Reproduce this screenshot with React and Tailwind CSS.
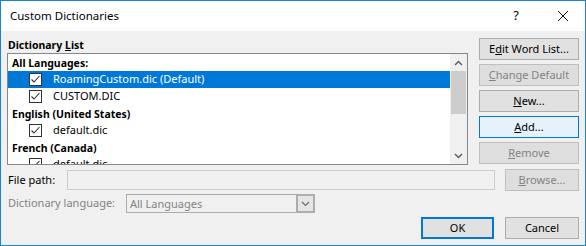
import React from "react";

const font = { fontFamily: '"Segoe UI", "Noto Sans", "Liberation Sans", sans-serif' };

function Check() {
  return (
    <span className="flex h-[13px] w-[13px] items-center justify-center border border-[#333333] bg-white">
      <svg width="11" height="11" viewBox="0 0 11 11">
        <polyline points="1.5,5.5 4,8 9.5,2" fill="none" stroke="#333333" strokeWidth="1.1" />
      </svg>
    </span>
  );
}

function Btn({ children, disabled, focus, def, className = "" }) {
  let cls = "border border-[#adadad] bg-[#e1e1e1] text-black";
  if (disabled) cls = "border border-[#bfbfbf] bg-[#dedede] text-[#838383]";
  if (focus) cls = "border border-[#0078d7] bg-[#e5f1fb] text-black";
  if (def) cls = "border-2 border-[#0078d7] bg-[#e1e1e1] text-black";
  return (
    <div className={`flex h-[22px] items-center justify-center text-[11px] ${cls} ${className}`}>
      {children}
    </div>
  );
}

function Header({ children }) {
  return <div className="flex h-[17px] items-center pl-[4px] pt-[2px] text-[10.5px] font-bold text-black">{children}</div>;
}

function Item({ children, selected }) {
  return (
    <div className={`flex h-[17px] items-center text-[11px] ${selected ? "bg-[#0078d7] text-white" : "text-black"}`}>
      <div className="ml-[21px] mr-[11px]">
        <Check />
      </div>
      <span>{children}</span>
    </div>
  );
}

export default function App() {
  return (
    <div style={font} className="flex h-[246px] w-[586px] flex-col overflow-hidden border border-[#1883d7] bg-[#f0f0f0]">
      <div className="flex h-[30px] shrink-0 items-center bg-white">
        <span className="ml-[9px] flex-1 text-[11.5px] text-black">Custom Dictionaries</span>
        <span className="mr-[38px] text-[13px] text-black">?</span>
        <svg width="12" height="12" viewBox="0 0 12 12" className="mr-[16px]">
          <path d="M1 1 L11 11 M11 1 L1 11" stroke="#111" strokeWidth="1" />
        </svg>
      </div>
      <div className="flex flex-1 flex-col pl-[6px] pr-[6px]">
        <div className="flex">
          <div className="flex w-[461px] flex-col">
            <div className="mt-[7px] h-[15px] pl-[1px] text-[10.5px] leading-[15px] font-bold text-black">
              Dictionary <span className="underline">L</span>ist
            </div>
            <div className="flex h-[112px] border border-[#828790] bg-white">
              <div className="flex-1 overflow-hidden">
                <Header>All Languages:</Header>
                <Item selected>RoamingCustom.dic (Default)</Item>
                <Item>CUSTOM.DIC</Item>
                <Header>English (United States)</Header>
                <Item>default.dic</Item>
                <Header>French (Canada)</Header>
                <Item>default.dic</Item>
              </div>
              <div className="flex w-[17px] flex-col bg-[#f0f0f0]">
                <div className="flex h-[17px] items-center justify-center">
                  <svg width="9" height="6" viewBox="0 0 9 6">
                    <polyline points="1,5 4.5,1.5 8,5" fill="none" stroke="#606060" strokeWidth="1.5" />
                  </svg>
                </div>
                <div className="mx-[1px] h-[43px] bg-[#cdcdcd]"></div>
                <div className="flex-1"></div>
                <div className="flex h-[17px] items-center justify-center">
                  <svg width="9" height="6" viewBox="0 0 9 6">
                    <polyline points="1,1 4.5,4.5 8,1" fill="none" stroke="#606060" strokeWidth="1.5" />
                  </svg>
                </div>
              </div>
            </div>
          </div>
          <div className="ml-[11px] mt-[7px] flex w-[100px] flex-col gap-[4px]">
            <Btn>
              E<span className="underline">d</span>it Word List...
            </Btn>
            <Btn disabled>
              <span className="underline">C</span>hange Default
            </Btn>
            <Btn>
              <span className="underline">N</span>ew...
            </Btn>
            <Btn focus>
              <span className="underline">A</span>dd...
            </Btn>
            <Btn disabled>
              <span className="underline">R</span>emove
            </Btn>
          </div>
        </div>
        <div className="mt-[4px] flex items-center">
          <span className="w-[60px] pl-[1px] text-[11px] text-black">File path:</span>
          <div className="h-[20px] w-[428px] border border-[#cccccc] bg-[#f0f0f0]"></div>
          <Btn disabled className="ml-[10px] w-[74px]">
            <span className="underline">B</span>rowse...
          </Btn>
        </div>
        <div className="mt-[3px] flex items-center">
          <span className="w-[119px] pl-[1px] text-[11px] text-[#838383]">
            Dictionary lan<span className="underline">g</span>uage:
          </span>
          <div className="flex h-[19px] w-[189px] border border-[#adadad] bg-[#f0f0f0]">
            <span className="flex-1 pl-[3px] text-[11px] leading-[17px] text-[#838383]">All Languages</span>
            <div className="-my-[1px] -mr-[1px] flex w-[19px] items-center justify-center border-2 border-[#adadad] bg-[#e5e5e5]">
              <svg width="9" height="6" viewBox="0 0 9 6">
                <polyline points="1,1 4.5,4.5 8,1" fill="none" stroke="#6d6d6d" strokeWidth="1.2" />
              </svg>
            </div>
          </div>
        </div>
        <div className="mt-[4px] flex justify-end">
          <Btn def className="w-[73px]">OK</Btn>
          <Btn className="ml-[11px] w-[74px]">Cancel</Btn>
        </div>
      </div>
    </div>
  );
}
